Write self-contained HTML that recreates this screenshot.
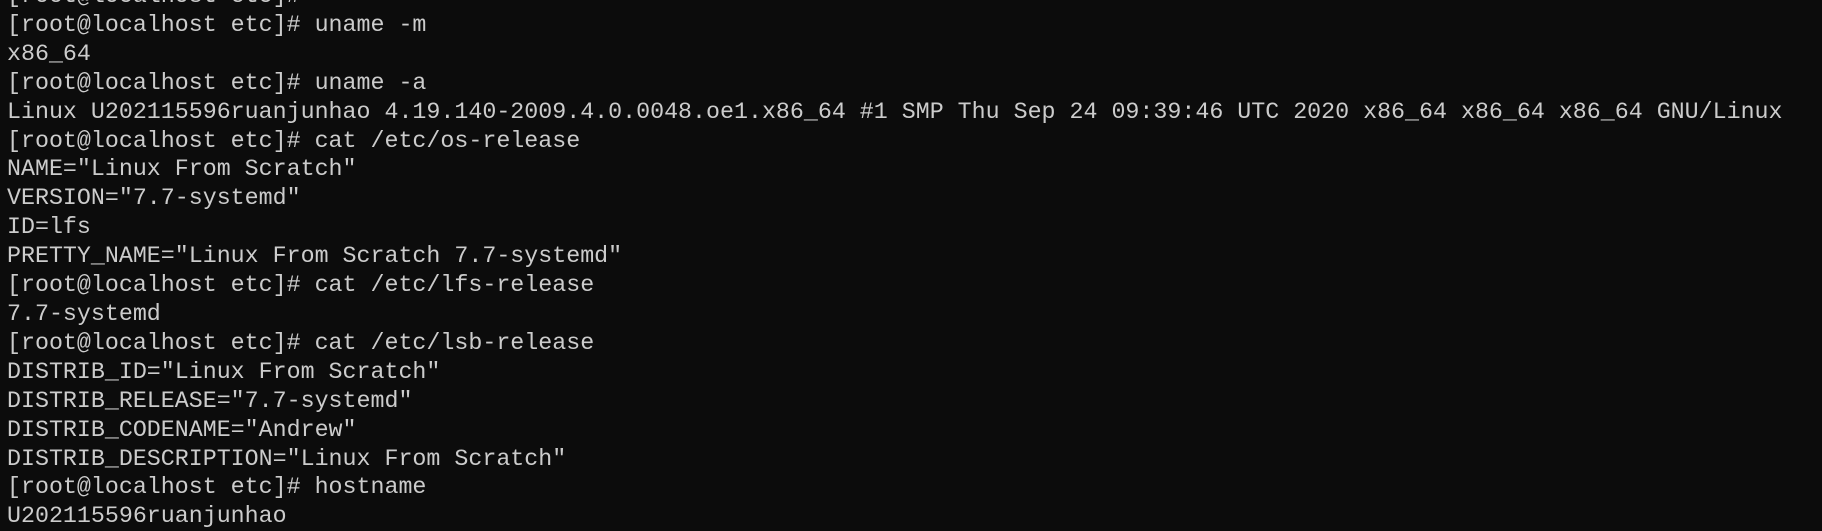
<!DOCTYPE html>
<html><head><meta charset="utf-8"><style>
html,body{margin:0;padding:0;background:#0c0c0c;width:1822px;height:531px;overflow:hidden}
pre{position:absolute;left:7px;top:-18px;margin:0;font-family:"Liberation Mono",monospace;font-size:23.3px;line-height:28.9px;color:#cccccc;white-space:pre}
</style></head><body><pre>[root@localhost etc]#
[root@localhost etc]# uname -m
x86_64
[root@localhost etc]# uname -a
Linux U202115596ruanjunhao 4.19.140-2009.4.0.0048.oe1.x86_64 #1 SMP Thu Sep 24 09:39:46 UTC 2020 x86_64 x86_64 x86_64 GNU/Linux
[root@localhost etc]# cat /etc/os-release
NAME="Linux From Scratch"
VERSION="7.7-systemd"
ID=lfs
PRETTY_NAME="Linux From Scratch 7.7-systemd"
[root@localhost etc]# cat /etc/lfs-release
7.7-systemd
[root@localhost etc]# cat /etc/lsb-release
DISTRIB_ID="Linux From Scratch"
DISTRIB_RELEASE="7.7-systemd"
DISTRIB_CODENAME="Andrew"
DISTRIB_DESCRIPTION="Linux From Scratch"
[root@localhost etc]# hostname
U202115596ruanjunhao</pre></body></html>
